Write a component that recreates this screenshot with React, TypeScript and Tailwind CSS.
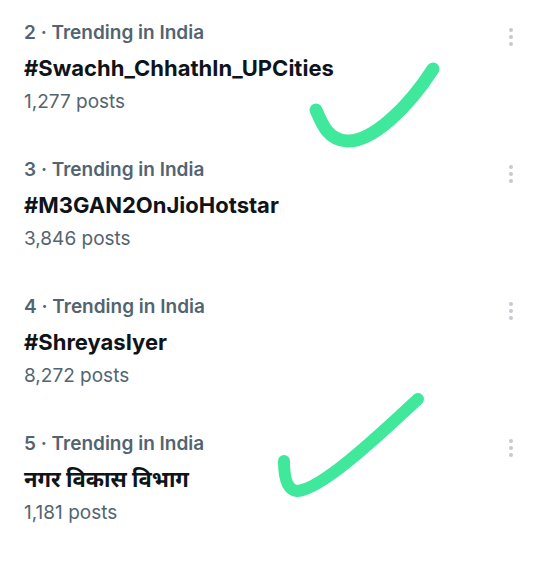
const trends = [
  { rank: 2, name: '#Swachh_ChhathIn_UPCities', posts: '1,277' },
  { rank: 3, name: '#M3GAN2OnJioHotstar', posts: '3,846' },
  { rank: 4, name: '#ShreyasIyer', posts: '8,272' },
  { rank: 5, name: 'नगर विकास विभाग', posts: '1,181' },
]

function Dots() {
  return (
    <div className="flex flex-col items-center gap-[3px] pt-[2px]">
      <span className="size-[4px] rounded-full bg-[#c4cacf]" />
      <span className="size-[4px] rounded-full bg-[#c4cacf]" />
      <span className="size-[4px] rounded-full bg-[#c4cacf]" />
    </div>
  )
}

export default function App() {
  return (
    <div className="relative h-[570px] w-[540px] overflow-hidden bg-white font-['Inter','Noto_Sans','Noto_Sans_Devanagari',sans-serif]">
      <div className="flex flex-col pt-[19px]">
        {trends.map((t) => (
          <div key={t.rank} className="flex h-[137px] items-start justify-between pl-[24px] pr-[27px]">
            <div className="flex flex-col">
              <div className="text-[19px] leading-[28px] font-semibold text-[#536471]">
                {t.rank} · Trending in India
              </div>
              <div className="mt-[7px] text-[22px] leading-[28px] font-bold text-[#0f1419]">{t.name}</div>
              <div className="mt-[7px] text-[19px] leading-[26px] text-[#536471]">{t.posts} posts</div>
            </div>
            <div className="pt-[7px]">
              <Dots />
            </div>
          </div>
        ))}
      </div>

      <svg className="pointer-events-none absolute inset-0" width="540" height="570" viewBox="0 0 540 570" fill="none">
        <path
          d="M316 110 C322 124 328 140 347 141 C372 142 408 108 433 69"
          stroke="#3fe89a"
          strokeWidth="13"
          strokeLinecap="round"
          strokeLinejoin="round"
        />
        <path
          d="M284 461 C284 474 286 490 297 491 C320 490 372 442 418 399"
          stroke="#3fe89a"
          strokeWidth="12"
          strokeLinecap="round"
          strokeLinejoin="round"
        />
      </svg>
    </div>
  )
}
